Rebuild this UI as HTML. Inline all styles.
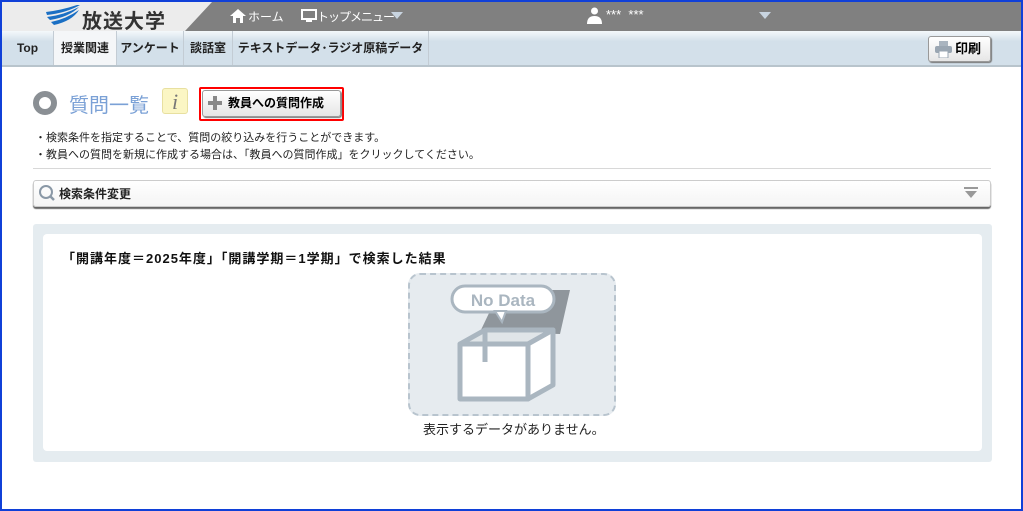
<!DOCTYPE html>
<html><head><meta charset="utf-8"><style>
*{box-sizing:border-box;margin:0;padding:0}
body{width:1023px;height:511px;overflow:hidden;font-family:"Liberation Sans","Noto Sans CJK JP",sans-serif;background:#fff;position:relative}
.frame{position:absolute;inset:0;border:2px solid #1040d8;border-bottom-width:2px}
.abs{position:absolute}
.hdr{left:2px;top:2px;width:1019px;height:29px;background:#808080}
.logo{left:2px;top:2px;width:210px;height:29px;background:#ececec;clip-path:polygon(0 0,100% 0,calc(100% - 27px) 100%,0 100%)}
.nav{left:2px;top:31px;width:1019px;height:36px;background:linear-gradient(#f4f8fb,#d3e0ea 30%,#d3e0ea);border-bottom:2px solid #b8c4cc}
.nav span{position:absolute;top:0;height:34px;line-height:34px;font-size:12px;font-weight:bold;color:#222;border-right:1px solid #c3ccd4;text-align:center}
.w{color:#fff;font-size:12px}
.btn{background:linear-gradient(#fff,#e6e6e6);border:1px solid #999;border-radius:3px;box-shadow:1px 1px 1px #777}
</style></head><body>
<div class="abs hdr"></div>
<div class="abs logo"></div>
<svg class="abs" style="left:44px;top:4px" width="38" height="22" viewBox="0 0 38 22"><path d="M2 8 Q18 6 33 1 L36 1 Q22 9 3 11Z M3 13 Q20 11 35 3 Q25 13 6 16Z M7 18 Q22 15 35 6 Q28 17 10 21Z" fill="#1a6fc4"/></svg>
<div class="abs" style="left:82px;top:5px;font-size:20px;font-weight:bold;color:#333;letter-spacing:1px">放送大学</div>
<svg class="abs" style="left:230px;top:9px" width="16" height="14"><path d="M8 0 L16 7 H13 V14 H10 V9 H6 V14 H3 V7 H0Z" fill="#fff"/></svg>
<div class="abs w" style="left:248px;top:8px">ホーム</div>
<svg class="abs" style="left:301px;top:9px" width="16" height="14"><rect x="1" y="1" width="14" height="9" fill="none" stroke="#fff" stroke-width="2"/><rect x="5" y="11" width="6" height="2" fill="#fff"/></svg>
<div class="abs w" style="left:317px;top:8px;letter-spacing:-1px">トップメニュー</div>
<svg class="abs" style="left:391px;top:12px" width="12" height="7"><path d="M0 0H12L6 7Z" fill="#c8d4e0"/></svg>
<svg class="abs" style="left:587px;top:7px" width="15" height="17"><circle cx="7.5" cy="4" r="3.5" fill="#fff"/><path d="M0 17 Q0 9 7.5 9 Q15 9 15 17Z" fill="#fff"/></svg>
<div class="abs w" style="left:606px;top:7px;font-size:13px">***&nbsp;&nbsp;***</div>
<svg class="abs" style="left:759px;top:12px" width="12" height="7"><path d="M0 0H12L6 7Z" fill="#c8d4e0"/></svg>
<div class="abs nav">
<span style="left:0;width:52px">Top</span>
<span style="left:52px;width:63px;background:#f4f6f8">授業関連</span>
<span style="left:115px;width:67px">アンケート</span>
<span style="left:182px;width:49px">談話室</span>
<span style="left:231px;width:196px">テキストデータ･ラジオ原稿データ</span>
</div>
<div class="abs btn" style="left:928px;top:36px;width:63px;height:26px;font-size:13px;font-weight:bold;line-height:24px;padding-left:26px">印刷</div>
<svg class="abs" style="left:935px;top:41px" width="17" height="17"><rect x="4" y="0" width="9" height="5" fill="#a9b4bf"/><rect x="0" y="5" width="17" height="7" rx="2" fill="#9aa6b2"/><rect x="4" y="10" width="9" height="7" fill="#fff" stroke="#9aa6b2"/></svg>
<div class="abs" style="left:33px;top:91px;width:24px;height:24px;border-radius:50%;border:6px solid #8a8f94;background:#fff"></div>
<div class="abs" style="left:69px;top:89px;font-size:20px;color:#7ba1d6">質問一覧</div>
<div class="abs" style="left:162px;top:88px;width:26px;height:26px;background:#fbf6c4;border:1px solid #e8e0a0;border-radius:3px;font-family:'Liberation Serif',serif;font-style:italic;font-size:22px;color:#777;text-align:center;line-height:25px">i</div>
<div class="abs" style="left:199px;top:87px;width:145px;height:34px;border:2px solid #f00;border-radius:2px"></div>
<div class="abs btn" style="left:202px;top:90px;width:139px;height:27px;font-size:12px;font-weight:bold;line-height:25px;padding-left:25px">教員への質問作成</div>
<div class="abs" style="left:208px;top:96px;width:14px;height:14px"><div class="abs" style="left:5px;top:0;width:4px;height:14px;background:#888"></div><div class="abs" style="left:0;top:5px;width:14px;height:4px;background:#888"></div></div>
<div class="abs" style="left:35px;top:130px;font-size:11px;line-height:17px;color:#222">・検索条件を指定することで、質問の絞り込みを行うことができます。<br>・教員への質問を新規に作成する場合は、「教員への質問作成」をクリックしてください。</div>
<div class="abs" style="left:33px;top:168px;width:958px;height:1px;background:#d8d8d8"></div>
<div class="abs" style="left:33px;top:180px;width:958px;height:27px;background:linear-gradient(#fff,#f4f4f4);border:1px solid #ccc;border-radius:3px;box-shadow:0 2px 1px #666"></div>
<svg class="abs" style="left:38px;top:184px" width="18" height="18"><circle cx="8" cy="8" r="6" fill="none" stroke="#8a98a6" stroke-width="2"/><path d="M12 12 L16 16" stroke="#8a98a6" stroke-width="2.5"/></svg>
<div class="abs" style="left:59px;top:185px;font-size:12px;font-weight:bold;color:#222">検索条件変更</div>
<svg class="abs" style="left:964px;top:187px" width="14" height="12"><rect x="0" y="0" width="14" height="2" fill="#999"/><path d="M1 4H13L7 11Z" fill="#999"/></svg>
<div class="abs" style="left:33px;top:224px;width:959px;height:238px;background:#e5ecf0;border-radius:3px"></div>
<div class="abs" style="left:43px;top:234px;width:939px;height:217px;background:#fff;border-radius:4px"></div>
<div class="abs" style="left:62px;top:248px;font-size:13px;font-weight:bold;color:#111;letter-spacing:1px">「開講年度＝2025年度」「開講学期＝1学期」で検索した結果</div>
<div class="abs" style="left:408px;top:273px;width:208px;height:143px;background:#e6ebef;border:2px dashed #b8c4ce;border-radius:12px"></div>
<svg class="abs" style="left:440px;top:282px" width="140" height="125" viewBox="0 0 140 125">
<path d="M40 50 L60 8 L130 8 L120 52 Z" fill="#8f969c"/>
<path d="M20 62 L45 48 L113 48 L88 62Z" fill="#e0e5e8" stroke="#aab6c0" stroke-width="5" stroke-linejoin="round"/>
<path d="M20 62 H88 V117 H20Z" fill="#fff" stroke="#aab6c0" stroke-width="5" stroke-linejoin="round"/>
<path d="M88 62 L113 48 V103 L88 117Z" fill="#fff" stroke="#aab6c0" stroke-width="5" stroke-linejoin="round"/>
<path d="M45 48 V80" stroke="#aab6c0" stroke-width="5"/>
<rect x="12" y="4" width="102" height="26" rx="13" fill="#fff" stroke="#aab6c0" stroke-width="3"/>
<path d="M55 29 L62 40 L66 29Z" fill="#fff" stroke="#aab6c0" stroke-width="2"/>
<text x="63" y="24" text-anchor="middle" font-family="Liberation Sans,sans-serif" font-weight="bold" font-size="17" fill="#aab6c0">No Data</text>
</svg>
<div class="abs" style="left:423px;top:419px;font-size:13px;color:#222">表示するデータがありません。</div>
<div class="frame"></div>
</body></html>
